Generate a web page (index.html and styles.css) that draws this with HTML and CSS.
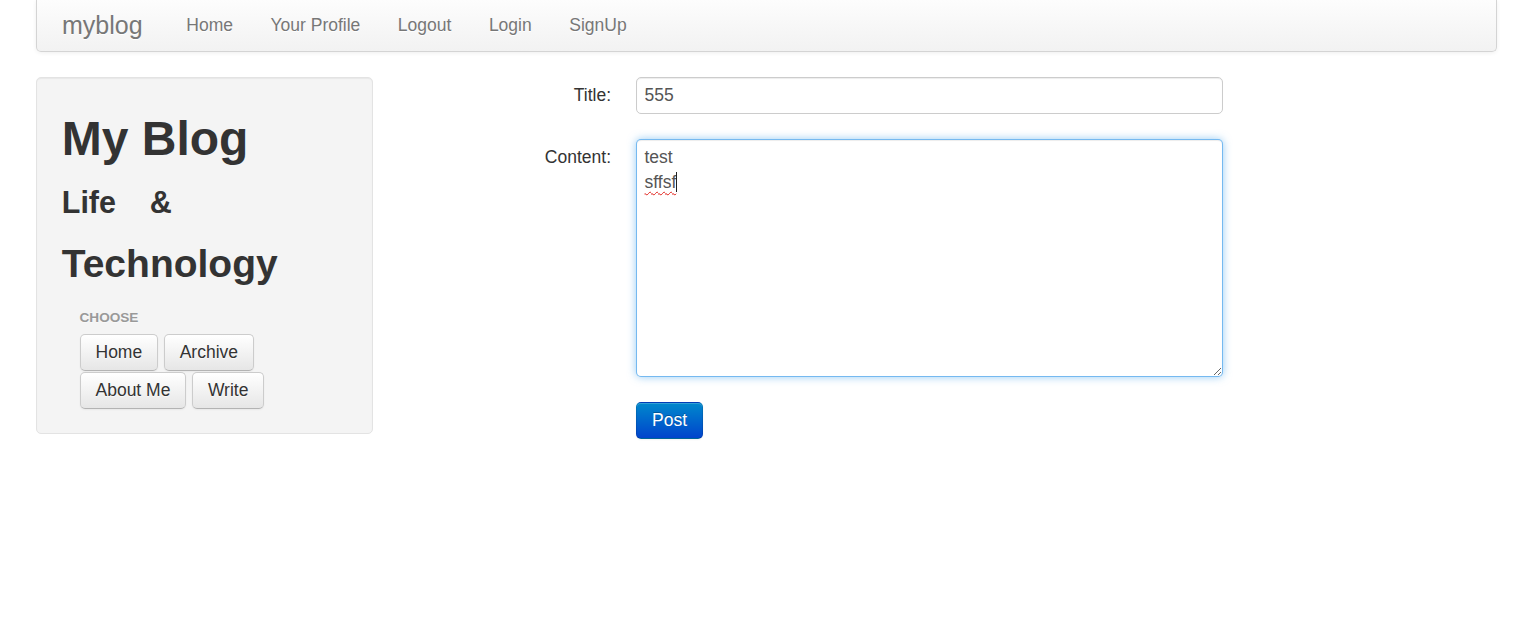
FILE: index.html
```html
<!DOCTYPE html>
<html lang="en">
<head>
<meta charset="utf-8">
<title>myblog</title>
<link rel="stylesheet" href="styles.css">
</head>
<body>
<div class="page">
  <header class="navbar">
    <a class="brand" href="#">myblog</a>
    <ul class="nav">
      <li><a href="#">Home</a></li>
      <li><a href="#">Your Profile</a></li>
      <li><a href="#">Logout</a></li>
      <li><a href="#">Login</a></li>
      <li><a href="#">SignUp</a></li>
    </ul>
  </header>
  <div class="row">
    <aside class="well">
      <h1>My Blog</h1>
      <h3>Life &nbsp;&nbsp; &amp;</h3>
      <h2>Technology</h2>
      <ul class="nav-list">
        <li class="nav-header">Choose</li>
        <li class="btn-row">
          <a class="btn" href="#">Home</a>
          <a class="btn" href="#">Archive</a>
          <a class="btn" href="#">About Me</a>
          <a class="btn" href="#">Write</a>
        </li>
      </ul>
    </aside>
    <form class="post-form">
      <div class="control-group">
        <label class="control-label">Title:</label>
        <div class="controls">
          <input class="input" type="text" value="555">
        </div>
      </div>
      <div class="control-group">
        <label class="control-label">Content:</label>
        <div class="controls">
          <div class="textarea" role="textbox" aria-multiline="true"><div>test</div><div><span class="misspelled">sffsf</span><span class="caret"></span></div></div>
        </div>
      </div>
      <div class="control-group">
        <div class="controls">
          <button class="btn btn-primary" type="button">Post</button>
        </div>
      </div>
    </form>
  </div>
</div>
</body>
</html>
```
FILE: styles.css
```css
* { box-sizing: border-box; }
html, body { margin: 0; padding: 0; background: #fff; }
body {
  font-family: "Liberation Sans", Arial, Helvetica, sans-serif;
  font-size: 17.5px;
  line-height: 25px;
  color: #333;
}
.page { padding: 0 23px 0 36px; }

/* navbar */
.navbar {
  display: flex;
  align-items: flex-start;
  height: 52px;
  padding: 0 25px;
  background: linear-gradient(to bottom, #fdfdfd, #f2f2f2);
  border: 1px solid #d4d4d4;
  border-top: none;
  border-radius: 0 0 5px 5px;
  box-shadow: 0 1px 4px rgba(0,0,0,0.065);
  margin-bottom: 25px;
}
.brand {
  display: block;
  margin-left: -25px;
  padding: 12.5px 25px 12.5px;
  font-size: 25px;
  line-height: 25px;
  color: #777;
  text-decoration: none;
  text-shadow: 0 1px 0 #fff;
}
.nav { display: flex; list-style: none; margin: 0; padding: 0; }
.nav a {
  display: block;
  padding: 12.5px 18.75px 12.5px;
  color: #777;
  text-decoration: none;
  text-shadow: 0 1px 0 #fff;
}

/* main row */
.row { display: flex; align-items: flex-start; }

.well {
  width: 337px;
  flex: none;
  padding: 23.75px;
  background: #f4f4f4;
  border: 1px solid #e3e3e3;
  border-radius: 5px;
  box-shadow: inset 0 1px 1px rgba(0,0,0,0.05);
}
.well h1, .well h2, .well h3 {
  margin: 12.5px 0 12.5px 1px;
  font-weight: bold;
  line-height: 50px;
  color: #333;
}
.well h1 { font-size: 48px; }
.well h2 { font-size: 39px; }
.well h3 { font-size: 30.5px; }

.nav-list {
  list-style: none;
  margin: 0;
  padding: 0 18.75px;
}
.nav-header {
  padding: 3px 0 4.5px;
  font-size: 13.6px;
  line-height: 25px;
  font-weight: bold;
  color: #999;
  text-transform: uppercase;
  text-shadow: 0 1px 0 rgba(255,255,255,0.5);
}
.btn-row {
  display: flex;
  flex-wrap: wrap;
  gap: 1px 5.5px;
}

.btn {
  display: inline-block;
  padding: 5px 15px;
  font-family: inherit;
  font-size: 17.5px;
  line-height: 25px;
  color: #333;
  text-align: center;
  text-decoration: none;
  text-shadow: 0 1px 1px rgba(255,255,255,0.75);
  background: linear-gradient(to bottom, #ffffff, #e6e6e6);
  border: 1px solid #cccccc;
  border-bottom-color: #b3b3b3;
  border-radius: 5px;
  box-shadow: inset 0 1px 0 rgba(255,255,255,0.2), 0 1px 2px rgba(0,0,0,0.05);
  cursor: pointer;
}
.btn-primary {
  color: #fff;
  text-shadow: 0 -1px 0 rgba(0,0,0,0.25);
  background: linear-gradient(to bottom, #0088cc, #0044cc);
  border-color: rgba(0,0,0,0.1) rgba(0,0,0,0.1) rgba(0,0,0,0.25);
}

/* form */
.post-form {
  flex: 1;
  margin: 0 0 0 38px;
}
.control-group {
  display: flex;
  align-items: flex-start;
  margin-bottom: 25px;
}
.control-label {
  width: 200px;
  flex: none;
  padding-top: 6.25px;
  text-align: right;
  color: #333;
}
.controls { margin-left: 225px; }
.control-label + .controls { margin-left: 25px; }

.input, .textarea {
  display: block;
  width: 587px;
  padding: 5px 7.5px;
  font-family: inherit;
  font-size: 17.5px;
  line-height: 25px;
  color: #555;
  background: #fff;
  border: 1px solid #cccccc;
  border-radius: 5px;
  box-shadow: inset 0 1px 1px rgba(0,0,0,0.075);
}
.input { height: 37px; }
.textarea {
  height: 238px;
  overflow: auto;
  resize: vertical;
  border-color: rgba(82,168,236,0.8);
  box-shadow: inset 0 1px 1px rgba(0,0,0,0.075), 0 0 8px rgba(82,168,236,0.6);
}
.misspelled {
  text-decoration: underline wavy #e0201a;
  text-decoration-thickness: 1px;
  text-underline-offset: 3px;
  text-decoration-skip-ink: none;
}
.caret {
  display: inline-block;
  width: 1px;
  height: 20px;
  background: #222;
  vertical-align: -4px;
}
```
